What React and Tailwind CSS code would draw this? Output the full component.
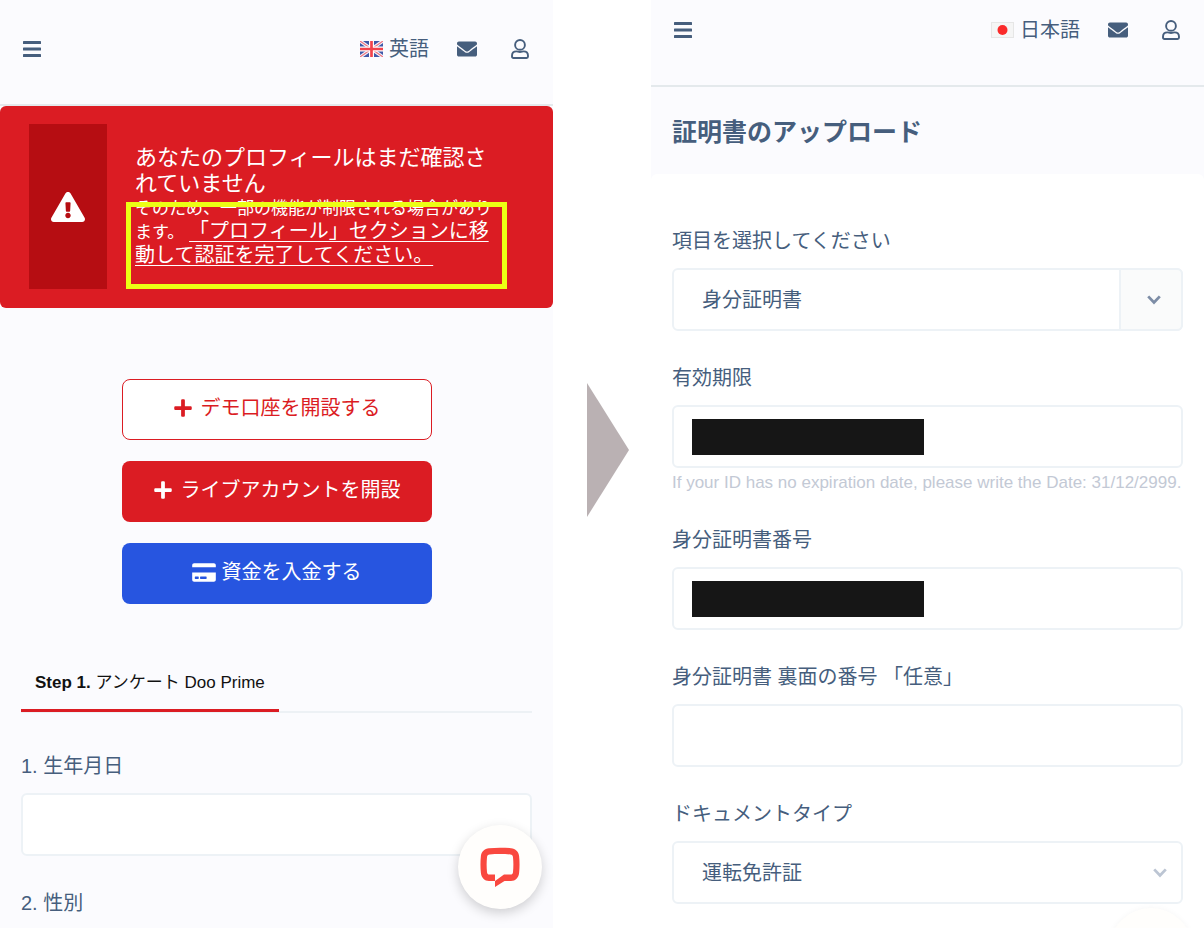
import React from 'react';
import { FaCreditCard, FaEnvelope, FaExclamationTriangle, FaPlus } from 'react-icons/fa';

const UkFlag = () => (
  <svg viewBox="0 0 60 42" preserveAspectRatio="none" className="h-4 w-[23px]" aria-hidden="true">
    <rect width="60" height="42" fill="#4058a8" />
    <path d="M0 0L60 42M60 0L0 42" stroke="#f3f3fa" strokeWidth="9" />
    <path d="M0 0L60 42M60 0L0 42" stroke="#ee7480" strokeWidth="3" />
    <path d="M30 0V42M0 21H60" stroke="#fff" strokeWidth="13" />
    <path d="M30 0V42M0 21H60" stroke="#f2434c" strokeWidth="7" />
  </svg>
);

const JapanFlag = () => (
  <svg viewBox="0 0 23 16" className="h-4 w-[23px]" aria-hidden="true">
    <rect x="0.5" y="0.5" width="22" height="15" fill="#f5f5f5" stroke="#e6e6e6" />
    <circle cx="11.5" cy="8" r="5" fill="#fa2a2a" />
  </svg>
);

const BarsIcon = () => (
  <svg viewBox="0 0 18 16" className="h-4 w-[18px]" fill="currentColor" aria-hidden="true">
    <rect width="18" height="3" rx="0.6" />
    <rect y="6.5" width="18" height="3" rx="0.6" />
    <rect y="13" width="18" height="3" rx="0.6" />
  </svg>
);

const UserIcon = () => (
  <svg viewBox="0 0 18 20" className="h-5 w-[18px]" fill="none" stroke="currentColor" strokeWidth="1.9" aria-hidden="true">
    <circle cx="9" cy="5.9" r="4.9" />
    <path d="M5.4 12.4C6.8 12.4 7.3 13 9 13S11.2 12.4 12.6 12.4C15.2 12.4 17 14.2 17 16.7V17.6C17 18.4 16.4 19 15.6 19H2.4C1.6 19 1 18.4 1 17.6V16.7C1 14.2 2.8 12.4 5.4 12.4Z" />
  </svg>
);

const ChevronIcon = ({ className }) => (
  <svg viewBox="0 0 14 10" fill="none" stroke="currentColor" strokeWidth="2.8" className={className} aria-hidden="true">
    <path d="M1.2 1.4L7 7.4L12.8 1.4" />
  </svg>
);

function Header({ flag, language, className = '' }) {
  return (
    <header className={`border-b-2 border-[#e4e9ec] pr-6 pb-[25px] pl-[23px] ${className}`}>
      <div className="flex h-[60px] items-center">
        <button type="button" aria-label="メニュー">
          <BarsIcon />
        </button>
        <button type="button" className="ml-auto flex items-center gap-[6px] text-[20px] leading-6">
          {flag}
          {language}
        </button>
        <a href="#messages" aria-label="メッセージ" className="ml-7">
          <FaEnvelope className="size-5" />
        </a>
        <a href="#account" aria-label="アカウント" className="ml-[34px]">
          <UserIcon />
        </a>
      </div>
    </header>
  );
}

function Field({ id, label, hint, children }) {
  return (
    <div>
      <label htmlFor={id} className="block pb-[15px] text-[20px] leading-6">
        {label}
      </label>
      {children}
      {hint && <p className="mt-1 text-[17px] leading-[21px] whitespace-nowrap text-[#c3c9d5]">{hint}</p>}
    </div>
  );
}

function TextInput({ id, masked }) {
  return (
    <div className="relative h-[63px]">
      <input
        id={id}
        type="text"
        className="size-full rounded-md border-2 border-[#edf2f6] bg-white px-5 text-[20px] outline-none"
      />
      {masked && <span className="absolute top-[14px] left-5 h-9 w-[232px] bg-[#161616]" />}
    </div>
  );
}

function Select({ id, options, addon }) {
  return (
    <div className="relative h-[63px]">
      <select
        id={id}
        className="size-full appearance-none rounded-md border-2 border-[#edf2f6] bg-white px-7 text-[20px] outline-none"
      >
        {options.map((option) => (
          <option key={option}>{option}</option>
        ))}
      </select>
      {addon ? (
        <span className="pointer-events-none absolute inset-y-0 right-0 flex w-16 items-center justify-center rounded-r-md border-2 border-[#edf2f6] bg-[#fafbfb] pl-[6px] text-[#7d8da6]">
          <ChevronIcon className="h-[10px] w-[14px]" />
        </span>
      ) : (
        <ChevronIcon className="pointer-events-none absolute top-[27px] right-4 h-[10px] w-[14px] text-[#bcc5d3]" />
      )}
    </div>
  );
}

function ChatButton({ className }) {
  return (
    <button
      type="button"
      aria-label="チャット"
      className={`absolute flex size-[84px] items-center justify-center rounded-full bg-[#fffefc] ${className}`}
    >
      <svg viewBox="0 0 40 40" className="size-10" aria-hidden="true">
        <path
          fill="#f9483f"
          fillRule="evenodd"
          d="M9 1.2C16 0.5 24 0.5 31 1.2C35.5 1.6 38.6 4.6 39.1 9C39.7 14.5 39.7 20.5 39.1 26C38.6 30.6 35.5 34 31 34H24.5L15 40V27.5H9.5C8 27.5 7.2 26.7 7 25.2C6.5 20 6.5 15 7 10.2C7.2 8.4 8 7.7 9.6 7.5C16 6.9 24 6.9 30.4 7.5C32 7.7 32.8 8.4 33 10.2C33.5 15 33.5 20 33 25.2C32.8 26.7 32 27.5 30.5 27.5H24L15 34H9C4.5 34 1.4 30.6 0.9 26C0.3 20.5 0.3 14.5 0.9 9C1.4 4.6 4.5 1.6 9 1.2Z"
        />
      </svg>
    </button>
  );
}

function ProfileScreen() {
  return (
    <section className="relative overflow-hidden bg-[#fbfbfe]">
      <Header flag={<UkFlag />} language="英語" className="pt-[19px]" />

      {/* Alert */}
      <div className="relative flex rounded-md bg-[#db1c23] pt-[18px] pr-[53px] pb-[19px] pl-[29px] text-white">
        <div className="flex min-h-[165px] w-[78px] shrink-0 items-center justify-center bg-[#b60d12]">
          <FaExclamationTriangle className="size-[34px]" />
        </div>
        <div className="ml-7 pt-[21px]">
          <h2 className="text-[22px] leading-[26px]">あなたのプロフィールはまだ確認されていません</h2>
          <p className="text-[17px] leading-6">
            そのため、一部の機能が制限される場合があります。{' '}
            <a href="#profile" className="text-[20px] leading-5 underline decoration-1 underline-offset-3">
              「プロフィール」セクションに移動して認証を完了してください。
            </a>
          </p>
        </div>
        <div className="pointer-events-none absolute top-24 right-[46px] left-[126px] h-[87px] border-5 border-[#ecff14]" />
      </div>

      <div className="mx-auto mt-[71px] flex w-[310px] flex-col gap-[21px] text-[20px]">
        <button type="button" className="flex h-[61px] items-center justify-center gap-2 rounded-lg border border-[#db1c23] bg-white pb-[3px] text-[#db1c23]">
          <FaPlus className="size-5" />
          デモ口座を開設する
        </button>
        <button type="button" className="flex h-[61px] items-center justify-center gap-2 rounded-lg bg-[#db1c23] pb-[3px] text-white">
          <FaPlus className="size-5" />
          ライブアカウントを開設
        </button>
        <button type="button" className="flex h-[61px] items-center justify-center gap-[6px] rounded-lg bg-[#2755e0] pb-[3px] text-white">
          <FaCreditCard className="h-[21px] w-6" />
          資金を入金する
        </button>
      </div>

      <div className="mt-[67px] px-[21px]">
        <nav className="flex border-b-2 border-[#edf1f5]">
          <a href="#step1" className="-mb-px border-b-3 border-[#db1c23] px-[14px] pb-[14px] text-[17px] leading-6 text-[#111]">
            <strong>Step 1.</strong> アンケート Doo Prime
          </a>
        </nav>
        <form className="flex flex-col gap-[35px] pt-[41px]">
          <Field id="birthday" label="1. 生年月日">
            <TextInput id="birthday" />
          </Field>
          <p className="text-[20px] leading-6">2. 性別</p>
        </form>
      </div>

      <ChatButton className="right-[11px] bottom-[19px] shadow-[0_4px_12px_rgba(0,0,0,0.18)]" />
    </section>
  );
}

function UploadScreen() {
  return (
    <section className="relative flex flex-col overflow-hidden bg-[#fbfbfe]">
      <Header flag={<JapanFlag />} language="日本語" />
      <h1 className="flex h-[87px] items-center px-[21px] pt-1 text-[25px] font-bold">証明書のアップロード</h1>

      <form className="flex grow flex-col gap-[35px] rounded-t-md bg-white px-[21px] pt-[55px]">
        <Field id="item" label="項目を選択してください">
          <Select id="item" options={['身分証明書']} addon />
        </Field>
        <Field
          id="expiry"
          label="有効期限"
          hint="If your ID has no expiration date, please write the Date: 31/12/2999."
        >
          <TextInput id="expiry" masked />
        </Field>
        <Field id="number" label="身分証明書番号">
          <TextInput id="number" masked />
        </Field>
        <Field id="back" label="身分証明書 裏面の番号 「任意」">
          <TextInput id="back" />
        </Field>
        <Field id="type" label="ドキュメントタイプ">
          <Select id="type" options={['運転免許証']} />
        </Field>
      </form>

      <ChatButton className="right-[11px] -bottom-16 shadow-[0_0_6px_rgba(0,0,0,0.04)]" />
    </section>
  );
}

export default function App() {
  return (
    <main className="grid min-h-screen grid-cols-[1fr_98px_1fr] bg-white font-['Liberation_Sans','Noto_Sans_CJK_JP',sans-serif] text-[#465e7d]">
      <ProfileScreen />
      <div className="flex items-center justify-center pb-7 pl-3">
        <svg viewBox="0 0 42 134" className="h-[134px] w-[42px]" aria-hidden="true">
          <path d="M0 0L42 67L0 134Z" fill="#bab1b3" />
        </svg>
      </div>
      <UploadScreen />
    </main>
  );
}
